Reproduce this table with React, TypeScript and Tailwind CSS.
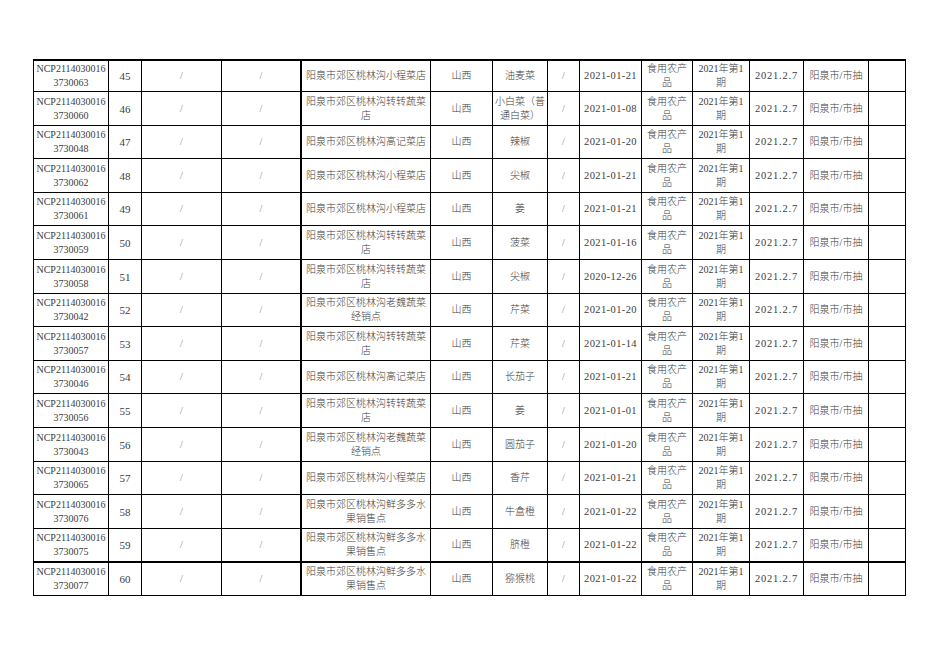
const COLS = [
  "w-[75px]",
  "w-[33px]",
  "w-[80px]",
  "w-[80px] border-r-2",
  "w-[129px]",
  "w-[62px]",
  "w-[55px]",
  "w-[32px]",
  "w-[62px]",
  "w-[51px]",
  "w-[57px]",
  "w-[54px]",
  "w-[65px]",
  "w-[37px]",
];

const XIAO = "阳泉市郊区桃林沟小程菜店";
const ZHUAN = "阳泉市郊区桃林沟转转蔬菜\n店";
const GAO = "阳泉市郊区桃林沟高记菜店";
const WEI = "阳泉市郊区桃林沟老魏蔬菜\n经销点";
const XIAN = "阳泉市郊区桃林沟鲜多多水\n果销售点";

interface Row {
  id: string;
  no: number;
  store: string;
  item: string;
  date: string;
  h: string;
}

const ROWS: Row[] = [
  { id: "3730063", no: 45, store: XIAO, item: "油麦菜", date: "2021-01-21", h: "h-[31px]" },
  { id: "3730060", no: 46, store: ZHUAN, item: "小白菜（普\n通白菜）", date: "2021-01-08", h: "h-[34px]" },
  { id: "3730048", no: 47, store: GAO, item: "辣椒", date: "2021-01-20", h: "h-[33px]" },
  { id: "3730062", no: 48, store: XIAO, item: "尖椒", date: "2021-01-21", h: "h-[34px]" },
  { id: "3730061", no: 49, store: XIAO, item: "姜", date: "2021-01-21", h: "h-[33px]" },
  { id: "3730059", no: 50, store: ZHUAN, item: "菠菜", date: "2021-01-16", h: "h-[34px]" },
  { id: "3730058", no: 51, store: ZHUAN, item: "尖椒", date: "2020-12-26", h: "h-[34px]" },
  { id: "3730042", no: 52, store: WEI, item: "芹菜", date: "2021-01-20", h: "h-[33px]" },
  { id: "3730057", no: 53, store: ZHUAN, item: "芹菜", date: "2021-01-14", h: "h-[34px]" },
  { id: "3730046", no: 54, store: GAO, item: "长茄子", date: "2021-01-21", h: "h-[33px]" },
  { id: "3730056", no: 55, store: ZHUAN, item: "姜", date: "2021-01-01", h: "h-[34px]" },
  { id: "3730043", no: 56, store: WEI, item: "圆茄子", date: "2021-01-20", h: "h-[34px]" },
  { id: "3730065", no: 57, store: XIAO, item: "香芹", date: "2021-01-21", h: "h-[33px]" },
  { id: "3730076", no: 58, store: XIAN, item: "牛盒橙", date: "2021-01-22", h: "h-[34px]" },
  { id: "3730075", no: 59, store: XIAN, item: "脐橙", date: "2021-01-22", h: "h-[34px] border-b-2" },
  { id: "3730077", no: 60, store: XIAN, item: "猕猴桃", date: "2021-01-22", h: "h-[33px]" },
];

function Cell({ col, children, muted }: { col: number; children?: React.ReactNode; muted?: boolean }) {
  return (
    <div
      className={`${COLS[col]} shrink-0 flex items-center justify-center text-center whitespace-pre-line leading-[14px] border-black border-r ${
        muted ? "text-[#888]" : "text-[#3c3c3c]"
      }`}
    >
      {children}
    </div>
  );
}

export default function App() {
  return (
    <div className="w-[936px] h-[662px] bg-white pt-[59px] pl-[33px] font-['Liberation_Serif','Noto_Sans_CJK_SC',serif] text-[10px] font-light">
      <div className="w-[873px] border-t-2 border-l border-black">
        {ROWS.map((r) => (
          <div key={r.no} className={`flex border-b border-black ${r.h}`}>
            <Cell col={0}>{`NCP2114030016\n${r.id}`}</Cell>
            <Cell col={1}>
              <span className="text-[11px]">{r.no}</span>
            </Cell>
            <Cell col={2} muted>/</Cell>
            <Cell col={3} muted>/</Cell>
            <Cell col={4}>{r.store}</Cell>
            <Cell col={5}>山西</Cell>
            <Cell col={6}>{r.item}</Cell>
            <Cell col={7} muted>/</Cell>
            <Cell col={8}>
              <span className="text-[10.5px] tracking-[0.4px]">{r.date}</span>
            </Cell>
            <Cell col={9}>{"食用农产\n品"}</Cell>
            <Cell col={10}>{"2021年第1\n期"}</Cell>
            <Cell col={11}>
              <span className="text-[10.5px] tracking-[0.8px]">2021.2.7</span>
            </Cell>
            <Cell col={12}>阳泉市/市抽</Cell>
            <Cell col={13} />
          </div>
        ))}
      </div>
    </div>
  );
}
